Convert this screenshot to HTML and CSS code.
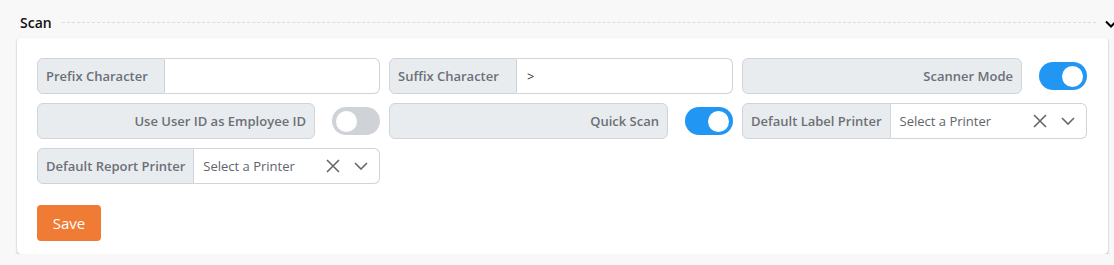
FILE: index.html
```html
<!DOCTYPE html>
<html lang="en">
<head>
  <meta charset="UTF-8" />
  <title>Scan Settings</title>
  <link rel="stylesheet" href="styles.css">
</head>
<body>

  <div class="section-head">
    <span class="section-title">Scan</span>
    <span class="section-rule"></span>
    <svg class="chevron" width="12" height="8" viewBox="0 0 12 8">
      <path d="M1 1.5 L6 6.5 L11 1.5" fill="none" stroke="#000" stroke-width="2"/>
    </svg>
  </div>

  <div class="card">
    <div class="grid">
      <!-- row 1 -->
      <div class="group">
        <span class="addon fixed">Prefix Character</span>
        <input class="field" type="text" value="">
      </div>
      <div class="group">
        <span class="addon fixed">Suffix Character</span>
        <input class="field" type="text" value="&gt;">
      </div>
      <div class="switch-row">
        <span class="addon wide">Scanner Mode</span>
        <span class="toggle on"><span class="knob"></span></span>
      </div>

      <!-- row 2 -->
      <div class="switch-row">
        <span class="addon wide">Use User ID as Employee ID</span>
        <span class="toggle"><span class="knob"></span></span>
      </div>
      <div class="switch-row">
        <span class="addon wide">Quick Scan</span>
        <span class="toggle on"><span class="knob"></span></span>
      </div>
      <div class="group">
        <span class="addon">Default Label Printer</span>
        <div class="select">
          <span class="placeholder">Select a Printer</span>
          <svg class="clear" width="14" height="14" viewBox="0 0 14 14">
            <path d="M1 1 L13 13 M13 1 L1 13" stroke="#666" stroke-width="1.6"/>
          </svg>
          <svg class="caret" width="14" height="8" viewBox="0 0 14 8">
            <path d="M1 1 L7 7 L13 1" fill="none" stroke="#666" stroke-width="1.6"/>
          </svg>
        </div>
      </div>

      <!-- row 3 -->
      <div class="group">
        <span class="addon">Default Report Printer</span>
        <div class="select">
          <span class="placeholder">Select a Printer</span>
          <svg class="clear" width="14" height="14" viewBox="0 0 14 14">
            <path d="M1 1 L13 13 M13 1 L1 13" stroke="#666" stroke-width="1.6"/>
          </svg>
          <svg class="caret" width="14" height="8" viewBox="0 0 14 8">
            <path d="M1 1 L7 7 L13 1" fill="none" stroke="#666" stroke-width="1.6"/>
          </svg>
        </div>
      </div>
    </div>

    <button class="save-btn">Save</button>
  </div>

</body>
</html>
```

FILE: styles.css
```css
body {
  margin: 0;
  padding: 0;
  background: #f8f8f8;
  font-family: 'Open Sans', 'Noto Sans', sans-serif;
  font-size: 13px;
  color: #212529;
  overflow: hidden;
}

.section-head {
  display: flex;
  align-items: center;
  height: 20px;
  padding: 12px 0 0 20px;
  margin-right: -3px;
}

.section-title {
  font-size: 14px;
  font-weight: 600;
  color: #111;
}

.section-rule {
  flex: 1;
  border-top: 1px dashed #dcdcdc;
  margin: 0 9px 0 10px;
}

.chevron {
  flex-shrink: 0;
  margin-top: 3px;
}

.card {
  margin: 6px 0 0 17px;
  width: 1091px;
  box-sizing: border-box;
  background: #fff;
  border-radius: 4px;
  box-shadow: 0 1px 2px rgba(0, 0, 0, 0.35);
  padding: 20px 21px 13px 20px;
}

.grid {
  display: grid;
  grid-template-columns: 343px 344px 345px;
  gap: 9px;
}

.group {
  display: flex;
  height: 36px;
}

.addon {
  display: flex;
  align-items: center;
  padding: 0 8px;
  background: #e9ecef;
  border: 1px solid #ced4da;
  border-radius: 6px 0 0 6px;
  color: #6b7079;
  font-weight: 600;
  font-size: 13px;
  white-space: nowrap;
  box-sizing: border-box;
}

.addon.fixed {
  width: 128px;
}

.field {
  flex: 1;
  min-width: 0;
  border: 1px solid #ced4da;
  border-left: none;
  border-radius: 0 6px 6px 0;
  padding: 0 10px;
  font-family: inherit;
  font-size: 13px;
  color: #333;
  outline: none;
}

.switch-row {
  display: flex;
  align-items: center;
  height: 36px;
}

.addon.wide {
  flex: 1;
  height: 36px;
  justify-content: flex-end;
  border-radius: 6px;
}

.toggle {
  width: 48px;
  height: 28px;
  margin-left: 17px;
  border-radius: 14px;
  background: #cfd3d8;
  display: flex;
  align-items: center;
  padding: 0 4px;
  box-sizing: border-box;
}

.toggle .knob {
  width: 21px;
  height: 21px;
  border-radius: 50%;
  background: #fff;
}

.toggle.on {
  background: #2196f3;
  justify-content: flex-end;
}

.select {
  flex: 1;
  display: flex;
  align-items: center;
  border: 1px solid #ced4da;
  border-left: none;
  border-radius: 0 6px 6px 0;
  padding: 0 11px 0 9px;
}

.placeholder {
  flex: 1;
  color: #5f646b;
  font-size: 13px;
}

.clear {
  margin-right: 14px;
}

.save-btn {
  margin-top: 21px;
  width: 64px;
  height: 36px;
  border: none;
  border-radius: 4px;
  background: #ef7b34;
  color: #fff;
  font-family: inherit;
  font-size: 15px;
  cursor: pointer;
}
```
